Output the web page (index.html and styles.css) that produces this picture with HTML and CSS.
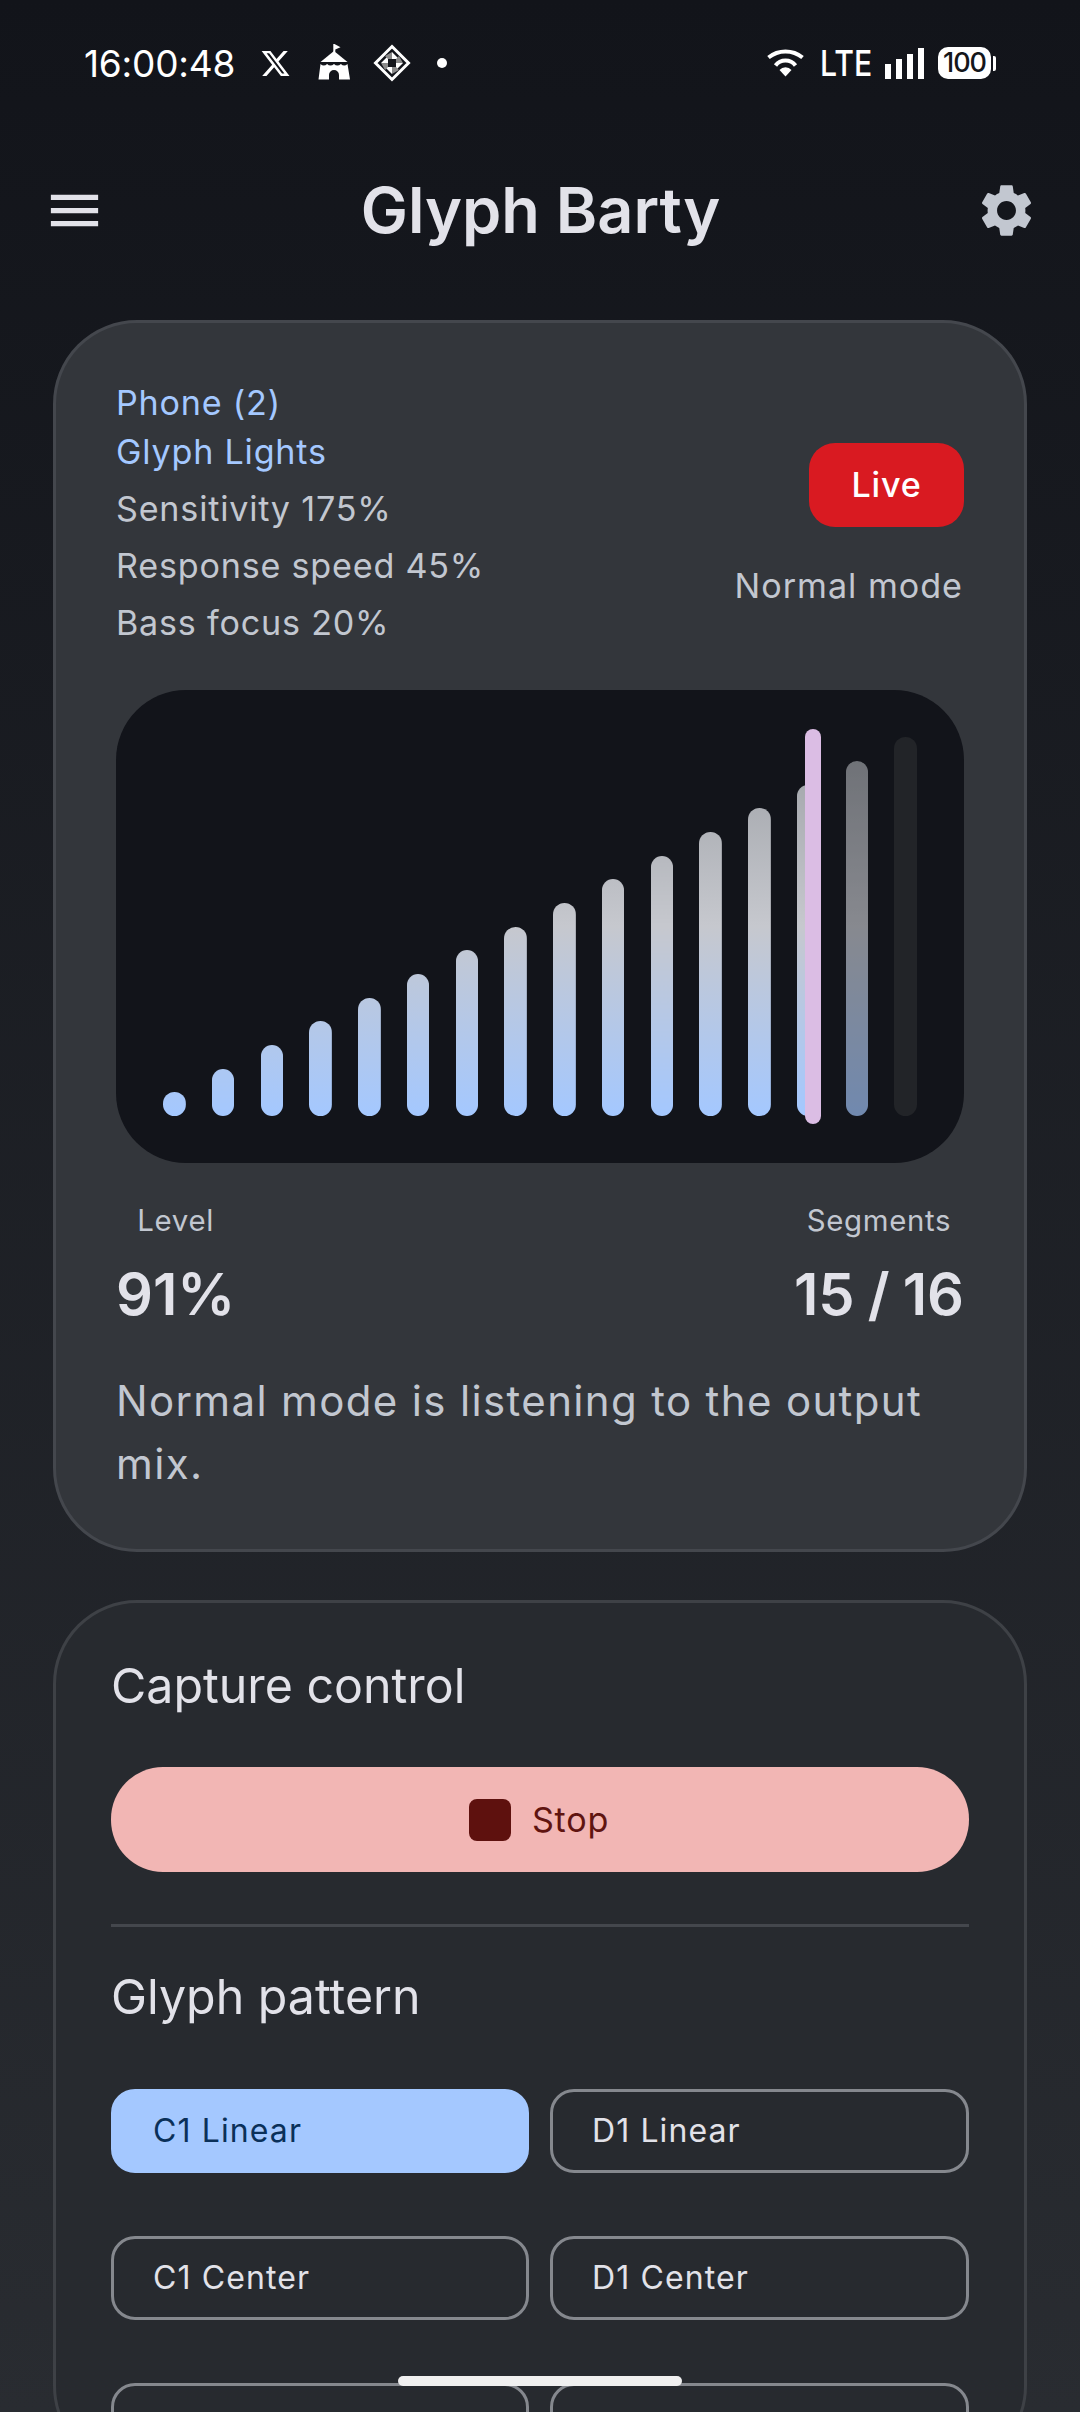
FILE: index.html
```html
<!doctype html>
<html lang="en">
<head>
    <meta charset="UTF-8">
    <meta name="viewport" content="width=device-width, initial-scale=1.0">
    <title>Glyph Barty</title>
    <link rel="stylesheet" href="styles.css">
</head>
<body>
    <div class="status-bar">
        <div class="status-left">
            <span class="clock">16:00:48</span>
            <svg class="icon-x" viewBox="0 0 24 24"><path fill="#fff" d="M18.244 2.25h3.308l-7.227 8.26 8.502 11.24H16.17l-5.214-6.817L4.99 21.75H1.68l7.73-8.835L1.254 2.25H8.08l4.713 6.231zm-1.161 17.52h1.833L7.084 4.126H5.117z"/></svg>
            <svg class="icon-tent" viewBox="0 0 32 36">
                <path fill="#fff" d="M15.300 0h1.200l6 3.200-5.200 2.200V8h-2z"/>
                <path fill="#fff" d="M16 7l13.500 11H2.500z"/>
                <path fill="#fff" d="M2.500 20q3.300 3 6.600 0 3.300 3 6.900 0 3.300 3 6.900 0 3.300 3 6.600 0l2.500 15.500H21V31a5 5 0 0 0-10 0v4.500H.5z"/>
            </svg>
            <svg class="icon-diamond" viewBox="0 0 38 38">
                <path fill="none" stroke="#fff" stroke-width="3" d="M19 2.500L35.500 19 19 35.500 2.500 19z"/>
                <path fill="#fff" d="M19 8l7 7h-7zM30 19l-7 7v-7zM19 30l-7-7h7zM8 19l7-7v7z"/>
                <path fill="#8a8a8a" d="M19 8l-7 4 3 3h4zM30 19l-4-7-3 3v4zM19 30l7-4-3-3h-4zM8 19l4 7 3-3v-4z"/>
                <path fill="#14161b" d="M17 17h4v4h-4z"/>
            </svg>
            <span class="status-dot"></span>
        </div>
        <div class="status-right">
            <svg class="icon-wifi" viewBox="0 0 39 28">
                <path fill="none" stroke="#fff" stroke-width="4" d="M2.500 8.500a27 27 0 0 1 34 0"/>
                <path fill="none" stroke="#fff" stroke-width="4" d="M9.500 16.500a12.500 12.500 0 0 1 20 0"/>
                <path fill="#fff" d="M13.500 21a8 8 0 0 1 12 0l-6 6.500z"/>
            </svg>
            <span class="lte">LTE</span>
            <div class="signal">
                <span class="sig sig-1"></span>
                <span class="sig sig-2"></span>
                <span class="sig sig-3"></span>
                <span class="sig sig-4"></span>
            </div>
            <div class="battery">
                <span class="battery-body">100</span>
                <span class="battery-nub"></span>
            </div>
        </div>
    </div>

    <div class="toolbar">
        <svg class="tool-icon" viewBox="0 0 24 24"><path fill="#e2e2e9" d="M3 18h18v-2H3v2zm0-5h18v-2H3v2zm0-7v2h18V6H3z"/></svg>
        <div class="toolbar-title">Glyph Barty</div>
        <svg class="tool-icon" viewBox="0 0 24 24"><path fill="#c2c7d0" d="M19.14 12.94c.04-.3.06-.61.06-.94 0-.32-.02-.64-.07-.94l2.03-1.58c.18-.14.23-.41.12-.61l-1.92-3.32c-.12-.22-.37-.29-.59-.22l-2.39.96c-.5-.38-1.03-.7-1.62-.94l-.36-2.54c-.04-.24-.24-.41-.48-.41h-3.84c-.24 0-.43.17-.47.41l-.36 2.54c-.59.24-1.13.57-1.62.94l-2.39-.96c-.22-.08-.47 0-.59.22L2.74 8.87c-.12.21-.08.47.12.61l2.03 1.58c-.05.3-.09.63-.09.94s.02.64.07.94l-2.03 1.58c-.18.14-.23.41-.12.61l1.92 3.32c.12.22.37.29.59.22l2.39-.96c.5.38 1.03.7 1.62.94l.36 2.54c.05.24.24.41.48.41h3.84c.24 0 .44-.17.47-.41l.36-2.54c.59-.24 1.13-.56 1.62-.94l2.39.96c.22.08.47 0 .59-.22l1.92-3.32c.12-.22.07-.47-.12-.61l-2.01-1.58zM12 15.6c-1.98 0-3.6-1.62-3.6-3.6s1.62-3.6 3.6-3.6 3.6 1.62 3.6 3.6-1.62 3.6-3.6 3.6z"/></svg>
    </div>

    <div class="content">
        <div class="card card-live">
            <div class="live-head">
                <div class="live-info">
                    <div class="device">Phone (2)<br>Glyph Lights</div>
                    <div class="info-line">Sensitivity 175%</div>
                    <div class="info-line">Response speed 45%</div>
                    <div class="info-line">Bass focus 20%</div>
                </div>
                <div class="live-side">
                    <div class="live-badge">Live</div>
                    <div class="info-line mode-line">Normal mode</div>
                </div>
            </div>

            <div class="chart">
                <div class="bar" style="height:24px"></div>
                <div class="bar" style="height:47.500px"></div>
                <div class="bar" style="height:71px"></div>
                <div class="bar" style="height:95px"></div>
                <div class="bar" style="height:118.500px"></div>
                <div class="bar" style="height:142px"></div>
                <div class="bar" style="height:166px"></div>
                <div class="bar" style="height:189.500px"></div>
                <div class="bar" style="height:213px"></div>
                <div class="bar" style="height:237px"></div>
                <div class="bar" style="height:260.500px"></div>
                <div class="bar" style="height:284px"></div>
                <div class="bar" style="height:308px"></div>
                <div class="bar" style="height:331px"></div>
                <div class="bar is-fading" style="height:355px"></div>
                <div class="bar is-off" style="height:379px"></div>
                <div class="peak"></div>
            </div>

            <div class="stats">
                <div class="stat">
                    <div class="stat-label">Level</div>
                    <div class="stat-value">91%</div>
                </div>
                <div class="stat">
                    <div class="stat-label">Segments</div>
                    <div class="stat-value">15 / 16</div>
                </div>
            </div>

            <div class="live-note">Normal mode is listening to the output mix.</div>
        </div>

        <div class="card card-control">
            <div class="section-title">Capture control</div>
            <div class="stop-btn"><span class="stop-square"></span>Stop</div>
            <div class="divider"></div>
            <div class="section-title">Glyph pattern</div>
            <div class="chip-grid">
                <div class="chip is-selected">C1 Linear</div>
                <div class="chip">D1 Linear</div>
                <div class="chip">C1 Center</div>
                <div class="chip">D1 Center</div>
                <div class="chip"></div>
                <div class="chip"></div>
            </div>
        </div>
    </div>

    <div class="home-bar"></div>
</body>
</html>
```

FILE: styles.css
```css
*{
    box-sizing: border-box;
}
html,body{
    margin: 0;
    width: 1080px;
    height: 2412px;
    overflow: hidden;
}
body{
    position: relative;
    font-family: "Inter", "Noto Sans", sans-serif;
    color: #e2e2e9;
    background: linear-gradient(#12141a 0, #292c31 2412px);
}

/* status bar */
.status-bar{
    display: flex;
    justify-content: space-between;
    align-items: center;
    height: 126px;
    padding: 0 84px;
    color: #fff;
}
.status-left,.status-right{
    display: flex;
    align-items: center;
}
.clock{
    font-size: 37px;
    width: 150px;
    white-space: nowrap;
    letter-spacing: -0.2px;
}
.icon-x{
    width: 31px;
    height: 31px;
    margin-left: 26px;
}
.icon-tent{
    width: 32px;
    height: 36px;
    margin-left: 27px;
    margin-top: -2px;
}
.icon-diamond{
    width: 38px;
    height: 38px;
    margin-left: 23px;
    margin-top: -1px;
}
.status-dot{
    width: 10px;
    height: 10px;
    margin-left: 26px;
    border-radius: 50%;
    background-color: #fff;
}
.icon-wifi{
    width: 39px;
    height: 28px;
}
.lte{
    width: 48px;
    margin-left: 15px;
    font-size: 36px;
    font-weight: 500;
    transform: scaleX(0.84);
    transform-origin: left center;
}
.signal{
    display: flex;
    align-items: flex-end;
    gap: 5px;
    height: 31px;
    margin-left: 17px;
}
.sig{
    width: 6px;
    background-color: #fff;
}
.sig-1{
    height: 15px;
}
.sig-2{
    height: 20px;
}
.sig-3{
    height: 25px;
}
.sig-4{
    height: 31px;
}
.battery{
    display: flex;
    align-items: center;
    margin-left: 14px;
}
.battery-body{
    width: 53px;
    height: 32px;
    border-radius: 10px;
    background-color: #fff;
    color: #14161b;
    font-size: 27px;
    font-weight: 500;
    line-height: 32px;
    text-align: center;
    letter-spacing: -1px;
}
.battery-nub{
    width: 3px;
    height: 15px;
    margin-left: 2px;
    border-radius: 0 2px 2px 0;
    background-color: #fff;
}

/* toolbar */
.toolbar{
    display: flex;
    justify-content: space-between;
    align-items: center;
    height: 168px;
    padding: 0 42px 0 43px;
}
.tool-icon{
    width: 63px;
    height: 63px;
}
.toolbar-title{
    font-size: 63px;
    font-weight: 600;
}

/* cards */
.content{
    display: flex;
    flex-direction: column;
    gap: 48px;
    padding: 26px 53px 0;
}
.card{
    border: 3px solid #44474d;
    border-radius: 84px;
}
.card-live{
    height: 1232px;
    padding: 56px 60px 0;
    background-color: #33363b;
}
.card-control{
    padding: 53px 55px 0;
    background-color: #272a2f;
    border-color: #3e4146;
}
.live-head{
    display: flex;
    justify-content: space-between;
    height: 311px;
}
.device{
    font-size: 34.125px;
    line-height: 48.500px;
    letter-spacing: 0.8px;
    color: #a4c8ff;
    margin-bottom: 4px;
}
.info-line{
    font-size: 34.125px;
    line-height: 57px;
    letter-spacing: 0.8px;
    color: #c2c7d0;
}
.mode-line{
    margin-right: 1px;
    letter-spacing: 1px;
}
.live-side{
    display: flex;
    flex-direction: column;
    align-items: flex-end;
    padding-top: 64px;
}
.live-badge{
    width: 155px;
    height: 84px;
    margin-bottom: 30px;
    border-radius: 26px;
    background-color: #d91a21;
    color: #fff;
    font-size: 34.125px;
    font-weight: 500;
    line-height: 84px;
    text-align: center;
    letter-spacing: 0.8px;
}

/* bars */
.chart{
    position: relative;
    display: flex;
    justify-content: space-between;
    align-items: flex-end;
    height: 473px;
    padding: 0 47px 47px;
    border-radius: 70px;
    background-color: #12141a;
}
.bar{
    width: 22.700px;
    border-radius: 12px;
    background-image: linear-gradient(to top, #a4c8ff 0, #c6c8ce 50%, #9da0a5 100%);
    background-size: 100% 380px;
    background-position: bottom;
}
.bar.is-fading{
    opacity: 0.65;
}
.bar.is-off{
    background-image: none;
    background-color: #222428;
}
.peak{
    position: absolute;
    left: 689px;
    top: 39px;
    width: 15.500px;
    height: 395px;
    border-radius: 8px;
    background-color: #dbbde4;
}

.stats{
    display: flex;
    justify-content: space-between;
    margin-top: 38px;
}
.stat{
    display: flex;
    flex-direction: column;
    align-items: center;
}
.stat-label{
    font-size: 29.400px;
    line-height: 40px;
    letter-spacing: 0.66px;
    color: #c2c7d0;
}
.stat-value{
    margin-top: 13px;
    font-size: 57.750px;
    font-weight: 600;
    line-height: 80px;
    word-spacing: -1.500px;
}
.live-note{
    margin-top: 35px;
    font-size: 42px;
    line-height: 63px;
    letter-spacing: 1.350px;
    color: #c2c7d0;
}

/* capture card */
.section-title{
    font-size: 48.300px;
    font-weight: 400;
    line-height: 60px;
}
.stop-btn{
    display: flex;
    justify-content: center;
    align-items: center;
    gap: 21px;
    height: 105px;
    margin-top: 51px;
    padding-right: 2px;
    border-radius: 52px;
    background-color: #f2b6b4;
    color: #601410;
    font-size: 34.125px;
    letter-spacing: 0.8px;
}
.stop-square{
    width: 42px;
    height: 42px;
    border-radius: 8px;
    background-color: #5e110e;
}
.divider{
    height: 3px;
    margin: 52px 0 40px;
    background-color: #44474d;
}
.chip-grid{
    display: grid;
    grid-template-columns: 418px 1fr;
    column-gap: 21px;
    row-gap: 63px;
    margin-top: 62px;
}
.chip{
    height: 84px;
    padding-left: 39px;
    border: 3px solid #85888e;
    border-radius: 24px;
    font-size: 32px;
    font-weight: 400;
    line-height: 78px;
    letter-spacing: 1.100px;
}
.chip.is-selected{
    border-color: #a4c8ff;
    background-color: #a4c8ff;
    color: #0a3059;
}

.home-bar{
    position: absolute;
    left: 398px;
    top: 2376px;
    width: 284px;
    height: 10px;
    border-radius: 5px;
    background-color: #f0f0f0;
}
```
